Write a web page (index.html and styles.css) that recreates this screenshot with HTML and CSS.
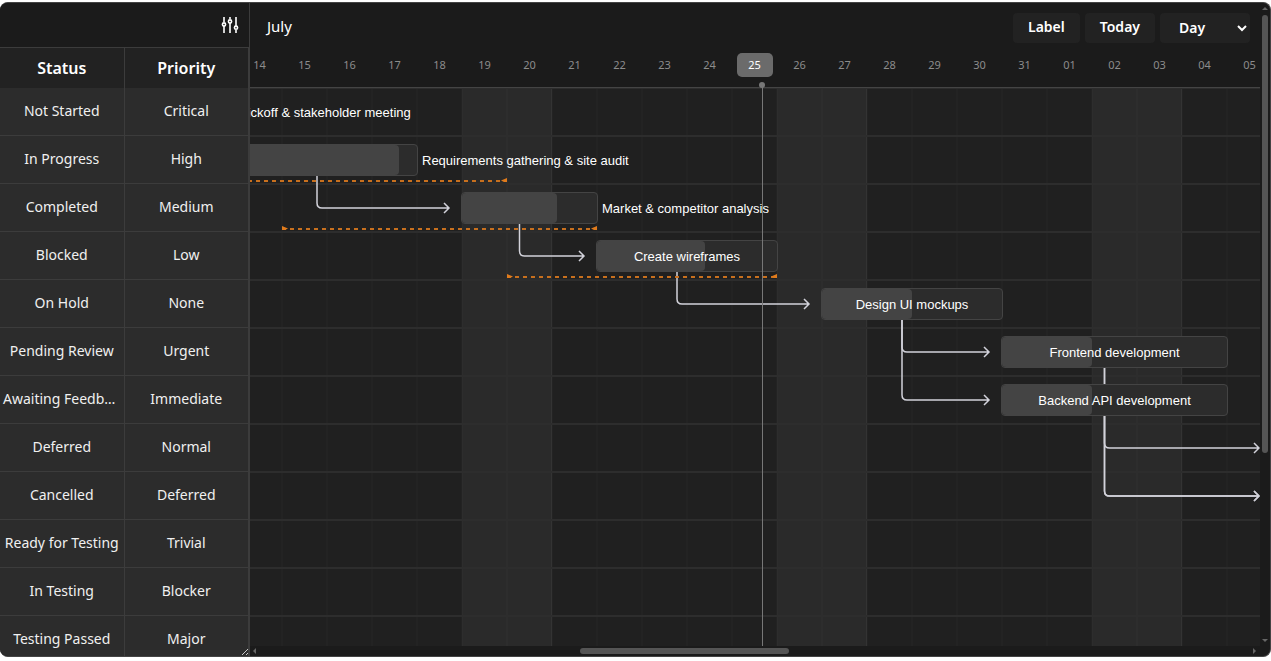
FILE: index.html
```html
<!DOCTYPE html>
<html lang="en">
<head>
<meta charset="utf-8">
<title>Project timeline</title>
<link rel="stylesheet" href="styles.css">
</head>
<body>
<main class="gantt">
  <section class="side">
    <div class="side-tools">
      <button class="icon-button" type="button" aria-label="Columns">
        <svg width="18" height="18" viewBox="0 0 18 18" fill="none" stroke="currentColor">
          <g stroke-width="2" opacity=".8"><path d="M3 1V6M3 10V17M9 1V3M9 7V17M15 1V10M15 14V17"/></g>
          <g stroke-width="1.6"><circle cx="3" cy="8.5" r="1.6"/><circle cx="9" cy="5.5" r="1.6"/><circle cx="15" cy="11.7" r="1.6"/></g>
        </svg>
      </button>
    </div>
    <table class="fields">
      <thead><tr><th scope="col">Status</th><th scope="col">Priority</th></tr></thead>
      <tbody>
        <tr><td>Not Started</td><td>Critical</td></tr>
        <tr><td>In Progress</td><td>High</td></tr>
        <tr><td>Completed</td><td>Medium</td></tr>
        <tr><td>Blocked</td><td>Low</td></tr>
        <tr><td>On Hold</td><td>None</td></tr>
        <tr><td>Pending Review</td><td>Urgent</td></tr>
        <tr><td>Awaiting Feedback</td><td>Immediate</td></tr>
        <tr><td>Deferred</td><td>Normal</td></tr>
        <tr><td>Cancelled</td><td>Deferred</td></tr>
        <tr><td>Ready for Testing</td><td>Trivial</td></tr>
        <tr><td>In Testing</td><td>Blocker</td></tr>
        <tr><td>Testing Passed</td><td>Major</td></tr>
      </tbody>
    </table>
    <svg class="grip" width="8" height="8" viewBox="0 0 8 8" stroke="#c8c8c8" fill="none"><path d="M1 7L7 1M5 7L7 5"/></svg>
  </section>

  <section class="chart">
    <div class="timeline">
      <div class="toolbar">
        <span class="month">July</span>
        <div class="controls">
          <button class="control" type="button">Label</button>
          <button class="control" type="button">Today</button>
          <div class="picker">
            <select class="control" aria-label="Time scale"><option>Day</option><option>Week</option><option>Month</option></select>
            <svg class="chevron" width="10" height="7" viewBox="0 0 10 7" fill="none" stroke="#fff" stroke-width="2"><path d="M1 1L5 5L9 1"/></svg>
          </div>
        </div>
      </div>
      <div class="dates">
        <span>14</span><span>15</span><span>16</span><span>17</span><span>18</span><span>19</span><span>20</span><span>21</span><span>22</span><span>23</span><span>24</span><span class="current"><b>25</b></span><span>26</span><span>27</span><span>28</span><span>29</span><span>30</span><span>31</span><span>01</span><span>02</span><span>03</span><span>04</span><span>05</span>
      </div>
      <div class="plot">
        <div class="canvas">
          <svg class="links" width="1100" height="576" fill="none">
            <g class="link">
              <path d="M80 88V115Q80 120 85 120H212M207 115L212 120L207 125"/>
              <path d="M282.500 136V163Q282.500 168 287.500 168H347M342 163L347 168L342 173"/>
              <path d="M440 184V211Q440 216 445 216H572M567 211L572 216L567 221"/>
              <path d="M665 232V259Q665 264 670 264H752M747 259L752 264L747 269"/>
              <path d="M665 232V307Q665 312 670 312H752M747 307L752 312L747 317"/>
              <path d="M867.500 280V355Q867.500 360 872.500 360H1022M1017 355L1022 360L1017 365"/>
              <path d="M867.500 280V403Q867.500 408 872.500 408H1022M1017 403L1022 408L1017 413"/>
              <path d="M867.500 328V403Q867.500 408 872.500 408H1022M1017 403L1022 408L1017 413"/>
            </g>
            <g class="baseline">
              <path d="M-45 93H268"/><path d="M45 141H360"/><path d="M270 189H540"/>
            </g>
            <g class="caps">
              <path d="M270 90V94H267L264 92.500Z"/>
              <path d="M45 138V142H48L51 140.500ZM360 138V142H357L354 140.500Z"/>
              <path d="M270 186V190H273L276 188.500ZM540 186V190H537L534 188.500Z"/>
            </g>
          </svg>
          <div class="bar" style="left:-90px;top:8px;width:88px"><span class="beside">Kickoff &amp; stakeholder meeting</span></div>
          <div class="bar" style="left:-45px;top:56px;width:226px"><i style="width:206px"></i><span class="beside">Requirements gathering &amp; site audit</span></div>
          <div class="bar" style="left:224px;top:104px;width:137px"><i style="width:95px"></i><span class="beside">Market &amp; competitor analysis</span></div>
          <div class="bar" style="left:359px;top:152px;width:182px"><i style="width:108px"></i><span>Create wireframes</span></div>
          <div class="bar" style="left:584px;top:200px;width:182px"><i style="width:90px"></i><span>Design UI mockups</span></div>
          <div class="bar" style="left:764px;top:248px;width:227px"><i style="width:90px"></i><span>Frontend development</span></div>
          <div class="bar" style="left:764px;top:296px;width:227px"><i style="width:90px"></i><span>Backend API development</span></div>
        </div>
      </div>
      <div class="now" style="left:512px"></div>
    </div>
    <div class="scroll vertical">
      <svg width="6" height="4" viewBox="0 0 6 4"><path d="M0 3L3 0L6 3Z"/></svg>
      <div class="track"><div class="thumb" style="height:70.600%"></div></div>
      <svg width="6" height="4" viewBox="0 0 6 4"><path d="M0 0L3 3L6 0Z"/></svg>
    </div>
    <div class="scroll horizontal">
      <svg width="4" height="6" viewBox="0 0 4 6"><path d="M3 0L0 3L3 6Z"/></svg>
      <div class="track"><div class="thumb" style="margin-left:32.300%;width:21.100%"></div></div>
      <svg width="4" height="6" viewBox="0 0 4 6"><path d="M0 0L3 3L0 6Z"/></svg>
    </div>
  </section>
</main>
</body>
</html>
```
FILE: styles.css
```css
* { box-sizing: border-box; }

body {
  margin: 0;
  height: 100vh;
  padding: 2px 0 4px;
  background: #fff;
  color: #fff;
  font-family: "Noto Sans", "Open Sans", sans-serif;
  overflow: hidden;
}

.gantt {
  display: flex;
  height: 100%;
  overflow: hidden;
  background: #1b1b1b;
  border: 1px solid #444;
  border-left: 0;
  border-radius: 8px;
}

/* Field columns */
.side {
  position: relative;
  flex: 0 0 249px;
  overflow: hidden;
  background: #2c2c2c;
}
.side-tools {
  display: flex;
  align-items: center;
  justify-content: flex-end;
  height: 45px;
  padding-right: 10px;
  background: #1b1b1b;
  border-bottom: 1px solid #3c3c3c;
}
.icon-button {
  display: flex;
  padding: 0;
  border: 0;
  background: none;
  color: #fff;
}
.fields {
  width: 100%;
  table-layout: fixed;
  border-collapse: separate;
  border-spacing: 0;
  text-align: center;
}
.fields th,
.fields td {
  padding: 0 3px;
  border-right: 1px solid #3c3c3c;
  overflow: hidden;
  white-space: nowrap;
  text-overflow: ellipsis;
}
.fields th {
  height: 40px;
  background: #222;
  font-size: 16px;
  font-weight: 600;
}
.fields td {
  height: 48px;
  padding-bottom: 3px;
  border-bottom: 1px solid #3c3c3c;
  color: #f0f0f0;
  font-size: 14px;
}
.grip {
  position: absolute;
  right: 0;
  bottom: 0;
}

/* Chart */
.chart {
  flex: 1;
  min-width: 0;
  display: grid;
  grid-template: minmax(0, 1fr) 10px / minmax(0, 1fr) 10px;
  border-left: 1px solid #3c3c3c;
}
.timeline {
  position: relative;
  display: flex;
  flex-direction: column;
  min-width: 0;
  overflow: hidden;
}
.toolbar {
  display: flex;
  flex: 0 0 40px;
  justify-content: space-between;
  padding: 10px 10px 0 17px;
}
.month { font-size: 15px; line-height: 26px; }
.controls { display: flex; gap: 5px; }
.control {
  height: 30px;
  padding: 0 15px 3px;
  border: 0;
  border-radius: 4px;
  background: #222;
  color: #fff;
  font: 600 14px "Noto Sans", "Open Sans", sans-serif;
}
.picker { position: relative; }
.picker .control {
  width: 90px;
  padding: 0 19px 1px;
  appearance: none;
}
.chevron {
  position: absolute;
  top: 12px;
  right: 3px;
  pointer-events: none;
}

.dates {
  display: flex;
  flex: 0 0 45px;
  padding-bottom: 1px;
  margin-left: -13px;
  border-bottom: 1px solid #444;
  color: #8c8c8c;
  font-size: 11px;
}
.dates span {
  display: flex;
  flex: 0 0 45px;
  align-items: center;
  justify-content: center;
}
.dates b {
  width: 36px;
  border-radius: 5px;
  background: #6b6b6b;
  color: #fff;
  font-weight: 400;
  line-height: 24px;
  text-align: center;
}

.plot {
  flex: 1;
  min-height: 0;
  overflow: hidden;
  background: #202020;
}
/* Row lines every 48px, day lines every 45px, weekend bands every 7 days */
.canvas {
  position: relative;
  height: 576px;
  margin-left: -13px;
  background-image:
    linear-gradient(#2d2d2d 1px, #0000 1px 47px, #2d2d2d 47px),
    linear-gradient(90deg, #ffffff04 1px, #0000 1px 44px, #ffffff04 44px),
    linear-gradient(90deg, #0000 225px, #2a2a2a 225px 314px, #303030 314px);
  background-size: 100% 48px, 45px 100%, 315px 100%;
}

.links {
  position: absolute;
  top: 0;
  left: 0;
  overflow: visible;
}
.link { stroke: #d2d2da; stroke-width: 1.5; }
.baseline {
  stroke: #c8701e;
  stroke-width: 2;
  stroke-dasharray: 4 4;
}
.caps { fill: #e07b1c; }

.bar {
  position: absolute;
  display: flex;
  align-items: center;
  justify-content: center;
  height: 32px;
  border: 1px solid #444;
  border-radius: 4px;
  background: #2c2c2c;
  font: 13px "Liberation Sans", Arial, sans-serif;
  white-space: nowrap;
}
.bar i {
  position: absolute;
  inset: 0 auto 0 0;
  border-radius: 4px;
  background: #444;
}
.bar span { position: relative; }
.bar .beside {
  position: absolute;
  left: 100%;
  margin-left: 5px;
}

.now {
  position: absolute;
  top: 82px;
  bottom: 0;
  width: 1px;
  background: #777;
}
.now::before {
  content: "";
  position: absolute;
  top: -3px;
  left: -3px;
  width: 6px;
  height: 6px;
  border-radius: 50%;
  background: #777;
}

/* Scrollbars */
.scroll {
  display: flex;
  align-items: center;
  gap: 4px;
  fill: #666;
}
.vertical { flex-direction: column; padding: 4px 0 3px; }
.horizontal { padding: 0 3px; }
.track { flex: 1; }
.thumb {
  min-width: 6px;
  min-height: 6px;
  border-radius: 3px;
  background: #555;
}
```
